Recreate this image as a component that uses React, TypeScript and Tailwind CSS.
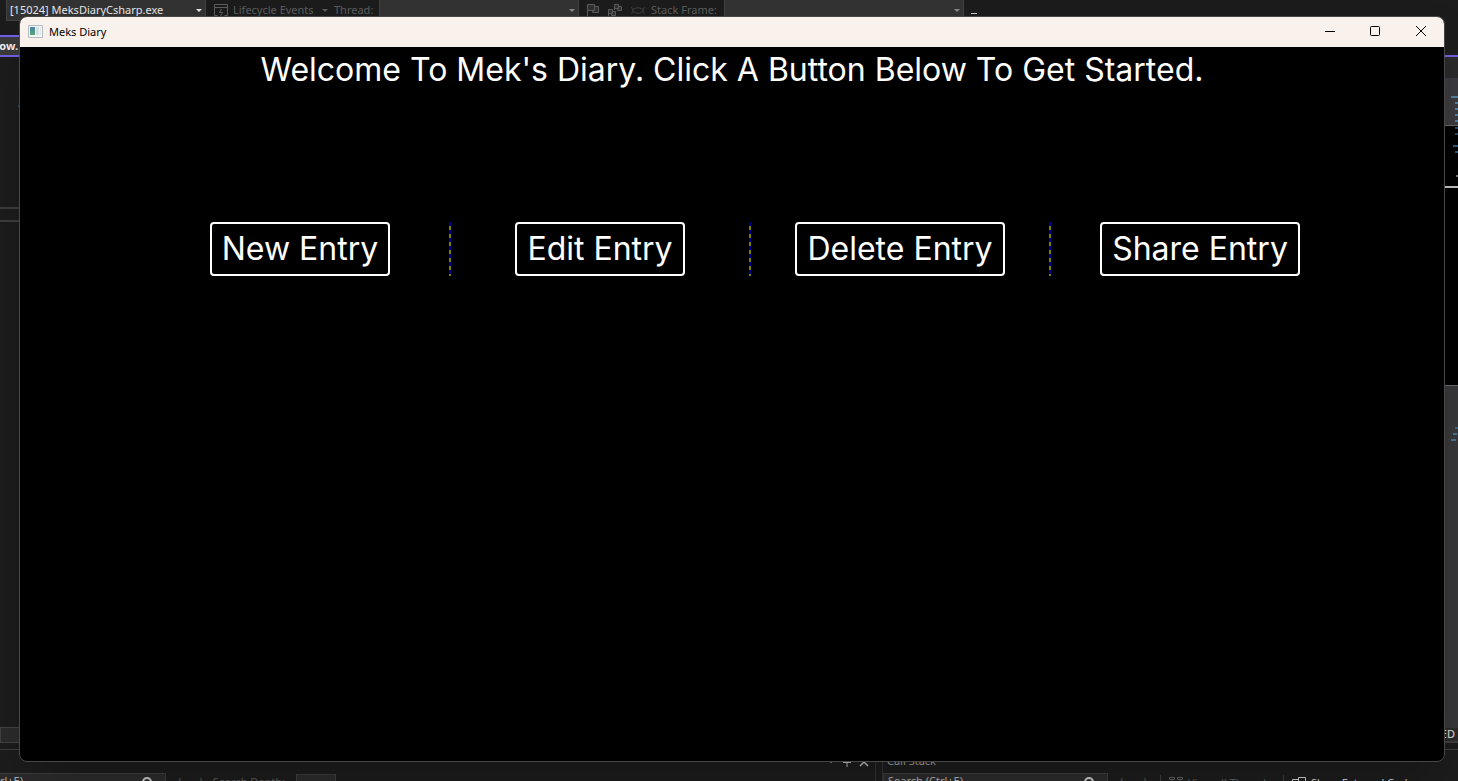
import React from "react";

const ui = "font-['Noto_Sans','Open_Sans',sans-serif]";

function Caret({ className = "" }: { className?: string }) {
  return (
    <svg viewBox="0 0 6 3" className={`h-[3px] w-[6px] shrink-0 ${className}`} fill="currentColor" aria-hidden="true">
      <path d="M0 0h6L3 3z" />
    </svg>
  );
}

function Combo({ label, text, className }: { label: string; text?: string; className: string }) {
  return (
    <button
      type="button"
      aria-label={label}
      className={`flex h-[21px] shrink-0 items-center justify-between border-x border-b border-[#424242] bg-[#333333] px-[3px] ${className}`}
    >
      <span>{text}</span>
      <Caret />
    </button>
  );
}

function SearchBox({ className }: { className: string }) {
  return (
    <div className={`flex h-[17px] shrink-0 items-center border border-[#3d3d3d] bg-[#2b2b2b] pr-3 ${className}`}>
      <input
        aria-label="Search"
        placeholder="Search (Ctrl+E)"
        className="min-w-0 flex-1 bg-transparent px-1 text-[11px] text-[#b0b0b0] outline-none placeholder:text-[#b0b0b0]"
      />
      <svg viewBox="0 0 12 12" className="size-3 text-[#c8c8c8]" fill="none" stroke="currentColor" strokeWidth="2" aria-hidden="true">
        <circle cx="6" cy="6" r="4" />
        <path d="M3 9 0 12" />
      </svg>
    </div>
  );
}

function Toolbar() {
  return (
    <div className="flex h-[35px] shrink-0 items-start pl-[6px] text-[11px] text-[#5c5c5c]">
      <Combo label="Process" text="[15024] MeksDiaryCsharp.exe" className="w-[200px] text-[#e6e6e6]" />
      <button type="button" className="ml-2 flex h-5 w-[114px] items-center gap-[5px]">
        <svg viewBox="0 0 14 12" className="h-3 w-[14px]" fill="none" stroke="currentColor" aria-hidden="true">
          <path d="M3.500 11.500h-3v-11h13v11h-3M.5 3.500h13M7.500 5 5.500 8.500h3L6.500 12" />
        </svg>
        <span>Lifecycle Events</span>
        <Caret className="ml-auto" />
      </button>
      <span className="ml-[6px] flex h-5 w-[45px] items-center whitespace-nowrap">Thread:</span>
      <Combo label="Thread" className="w-[200px] text-[#8a8a8a]" />
      <div className="ml-2 flex h-5 items-center gap-2">
        <svg viewBox="0 0 13 12" className="h-3 w-[13px]" fill="#303030" stroke="currentColor" aria-hidden="true">
          <path d="M.5 12V.5h7v6h-7M7.500 2.500h4v6h-6v-2" />
        </svg>
        <svg viewBox="0 0 15 13" className="h-[13px] w-[15px]" fill="#303030" stroke="currentColor" aria-hidden="true">
          <path d="M6.500 6V.5h4v4h-4M10.500 2.500h3v4h-4v-2M.5 13V5.500h4v4h-4M4.500 7.500h3v4h-4v-2" />
        </svg>
        <svg viewBox="0 0 14 9" className="h-[9px] w-[14px] text-[#404040]" fill="none" stroke="currentColor" aria-hidden="true">
          <path d="M0 1C1 3.500 3 3.500 4 2.500 6 1.500 8 1.500 10 2.500 11 3.500 13 3.500 14 1M0 8C1 5.500 3 5.500 4 6.500 6 7.500 8 7.500 10 6.500 11 5.500 13 5.500 14 8M2 3v3M12 3v3" />
        </svg>
      </div>
      <span className="ml-[6px] flex h-5 w-[73px] items-center whitespace-nowrap">Stack Frame:</span>
      <Combo label="Stack Frame" className="w-[240px] text-[#8a8a8a]" />
      <div className="ml-[7px] mt-[13px] h-[4px] w-[6px] border-y border-[#c8c8c8]" />
    </div>
  );
}

function LeftStrip() {
  return (
    <div className="flex w-5 flex-col overflow-hidden">
      <div className="flex h-[22px] shrink-0 items-center border-y-2 border-[#7160e8] bg-[#3a3a3a] text-[11px] font-bold text-[#f0f0f0]">
        <span className="-ml-1">low.</span>
      </div>
      <div className="mt-[48px] ml-auto h-[2px] w-[2px] bg-[#2d465c]" />
      <div className="mt-[100px] h-[15px] border-y-2 border-[#3d3d3d]" />
      <div className="flex-1" />
      <div className="h-4 border border-[#424242] bg-[#2b2b2b]" />
      <div className="h-[7px] border-b border-[#3d3d3d]" />
    </div>
  );
}

const upperMarks = [
  "mt-[18px] w-[7px]",
  "mt-1 w-[3px]",
  "mt-1 w-[3px]",
  "mt-1 w-[3px]",
  "mt-1 w-[3px]",
];

function RightStrip() {
  return (
    <div className="flex w-[15px] flex-col overflow-hidden">
      <div className="mt-5 h-[23px] shrink-0 border-t-2 border-[#7160e8] bg-[#2b2b2b]" />
      <div className="flex h-[48px] shrink-0 flex-col items-end border-b border-[#6a6a6a] bg-[#3b3a3f]">
        {upperMarks.map((m, i) => (
          <div key={i} className={`h-[2px] shrink-0 bg-[#54809f] ${m}`} />
        ))}
      </div>
      <div className="flex h-[60px] shrink-0 flex-col items-end bg-black">
        <div className="mt-[1px] h-[2px] w-[3px] bg-[#2d465c]" />
        <div className="mt-1 h-[2px] w-[3px] bg-[#2d465c]" />
        <div className="mt-[10px] h-[2px] w-[5px] bg-[#31597a]" />
        <div className="mt-1 h-[2px] w-[3px] bg-[#31597a]" />
        <div className="mt-[22px] h-[2px] w-[2px] bg-[#777777]" />
      </div>
      <div className="h-[199px] shrink-0 border-t-2 border-[#c4c4c4] bg-black" />
      <div className="flex flex-1 flex-col items-end border-t border-[#6a6a6a] bg-[#38383a]">
        <div className="mt-[41px] h-[2px] w-[3px] bg-[#41647f]" />
        <div className="mt-1 mr-[1px] h-[2px] w-[4px] bg-[#41749b]" />
        <div className="mt-1 mr-[2px] h-[2px] w-[5px] bg-[#41749b]" />
      </div>
      <div className="flex h-[15px] items-center justify-end border-b-2 border-[#3d3d3d] bg-[#2b2b2b] pr-[3px] text-[11px] text-[#e0e0e0]">
        ED
      </div>
      <div className="h-[7px] border-b border-[#3d3d3d]" />
    </div>
  );
}

function BottomPanels() {
  return (
    <div className="flex h-[31px] shrink-0 overflow-hidden text-[11px] text-[#9a9a9a]">
      <section className="flex w-[876px] shrink-0 flex-col border-r border-[#333333]">
        <div className="flex h-[23px] shrink-0 items-center justify-end gap-2 pr-[6px] text-[#b8b8b8]">
          <Caret className="mr-[1px]" />
          <svg viewBox="0 0 8 10" className="h-[10px] w-2" fill="none" stroke="currentColor" aria-hidden="true">
            <path d="M1.500 0v5.500M6.500 0v5.500M0 5.500h8M4 5.500V10" />
          </svg>
          <svg viewBox="0 0 10 10" className="size-[10px]" fill="none" stroke="currentColor" strokeWidth="1.5" aria-hidden="true">
            <path d="m1 1 8 8M9 1 1 9" />
          </svg>
        </div>
        <div className="flex shrink-0 items-start text-[#5c5c5c]">
          <SearchBox className="-ml-[57px] w-[223px]" />
          <span className="ml-3 flex h-[18px] w-[118px] items-center gap-[10px] whitespace-nowrap">
            <span>(</span>
            <span className="ml-2">)</span>
            <span>Search Depth:</span>
          </span>
          <div className="mt-[1px] h-4 w-10 border border-[#3d3d3d] bg-[#2b2b2b]" />
        </div>
      </section>
      <section className="ml-[6px] flex min-w-0 flex-1 flex-col border-l border-[#333333]">
        <h2 className="flex h-[23px] shrink-0 items-center pl-1">Call Stack</h2>
        <div className="flex shrink-0 items-start">
          <SearchBox className="w-[225px]" />
          <span className="ml-3 flex h-[18px] w-10 items-center gap-5 text-[#5c5c5c]">
            <span>(</span>
            <span>)</span>
          </span>
          <button type="button" className="mt-[2px] flex h-4 items-center gap-[5px] border-l border-[#3d3d3d] pl-2 text-[#5c5c5c]">
            <svg viewBox="0 0 14 12" className="h-3 w-[14px]" fill="none" stroke="currentColor" aria-hidden="true">
              <path d="M.5.5h5v2h-5zM8.500.5h5v2h-5zM3 3v8h8V3" />
            </svg>
            <span className="w-[95px] text-left whitespace-nowrap">View all Threads</span>
          </button>
          <button type="button" className="mt-[2px] flex h-4 items-center gap-[5px] border-l border-[#3d3d3d] pl-2 text-[#c8c8c8]">
            <svg viewBox="0 0 14 12" className="h-3 w-[14px]" fill="none" stroke="currentColor" aria-hidden="true">
              <path d="M6.500.5h7v11h-7zM6.500 2.500h-6v6h6" />
            </svg>
            <span className="whitespace-nowrap">Show External Code</span>
          </button>
        </div>
      </section>
    </div>
  );
}

const entries = ["New Entry", "Edit Entry", "Delete Entry", "Share Entry"];

function DiaryWindow() {
  return (
    <div className="absolute top-4 right-[13px] bottom-[19px] left-[19px] flex flex-col overflow-hidden rounded-lg border border-[#474747] bg-black text-white shadow-2xl">
      <header className="flex h-[30px] shrink-0 items-center bg-[#f9f1eb] pl-2 text-black">
        <svg viewBox="0 0 15 13" className="-mt-px h-[13px] w-[15px]" aria-hidden="true">
          <defs>
            <linearGradient id="pane" x1="0" y1="0" x2="0" y2="1">
              <stop offset="0" stopColor="#4b82a8" />
              <stop offset="1" stopColor="#55a878" />
            </linearGradient>
          </defs>
          <path d="M.5.5h14v12H.5z" fill="#f3f5f5" stroke="#b5bcc2" />
          <path d="M2 2h5v8H2z" fill="url(#pane)" />
          <path d="M8 2h3v8H8z" fill="#d5e0df" />
          <path d="M12 2h1v8h-1z" fill="#e3e8e8" />
        </svg>
        <span className={`ml-[6px] text-[11px] ${ui}`}>Meks Diary</span>
        <div className="ml-auto flex h-[28px] self-start">
          <button type="button" aria-label="Minimize" className="grid w-[45px] place-items-center">
            <svg viewBox="0 0 10 10" className="size-[10px]" stroke="currentColor" aria-hidden="true">
              <path d="M0 5.500h10" />
            </svg>
          </button>
          <button type="button" aria-label="Maximize" className="grid w-[45px] place-items-center">
            <svg viewBox="0 0 10 10" className="size-[10px]" fill="none" stroke="currentColor" aria-hidden="true">
              <rect x=".5" y=".5" width="9" height="9" rx="1" />
            </svg>
          </button>
          <button type="button" aria-label="Close" className="grid w-[47px] place-items-center">
            <svg viewBox="0 0 10 10" className="size-[10px]" stroke="currentColor" aria-hidden="true">
              <path d="m0 0 10 10M10 0 0 10" />
            </svg>
          </button>
        </div>
      </header>
      <main className="flex flex-col font-['Inter',sans-serif]">
        <h1 className="pt-[3px] text-center text-[32px] leading-[40px]">
          Welcome To Mek's Diary. Click A Button Below To Get Started.
        </h1>
        <div className="mt-[132px] ml-[130px] grid max-w-[1200px] grid-cols-4">
          {entries.map((entry, i) => (
            <div key={entry} className="flex">
              <div className="flex flex-1 justify-center">
                <button
                  type="button"
                  className="h-[54px] rounded border-2 border-white px-[10px] text-[32px] leading-[48px] whitespace-nowrap"
                >
                  {entry}
                </button>
              </div>
              {i < entries.length - 1 && (
                <div className="-mx-[1px] w-[2px] bg-[repeating-linear-gradient(to_bottom,#00008b_0_4px,#808000_4px_8px)]" />
              )}
            </div>
          ))}
        </div>
      </main>
    </div>
  );
}

export default function App() {
  return (
    <div className={`relative flex h-screen flex-col overflow-hidden bg-[#1c1c1c] ${ui}`}>
      <Toolbar />
      <div className="flex min-h-0 flex-1 justify-between">
        <LeftStrip />
        <RightStrip />
      </div>
      <BottomPanels />
      <DiaryWindow />
    </div>
  );
}
